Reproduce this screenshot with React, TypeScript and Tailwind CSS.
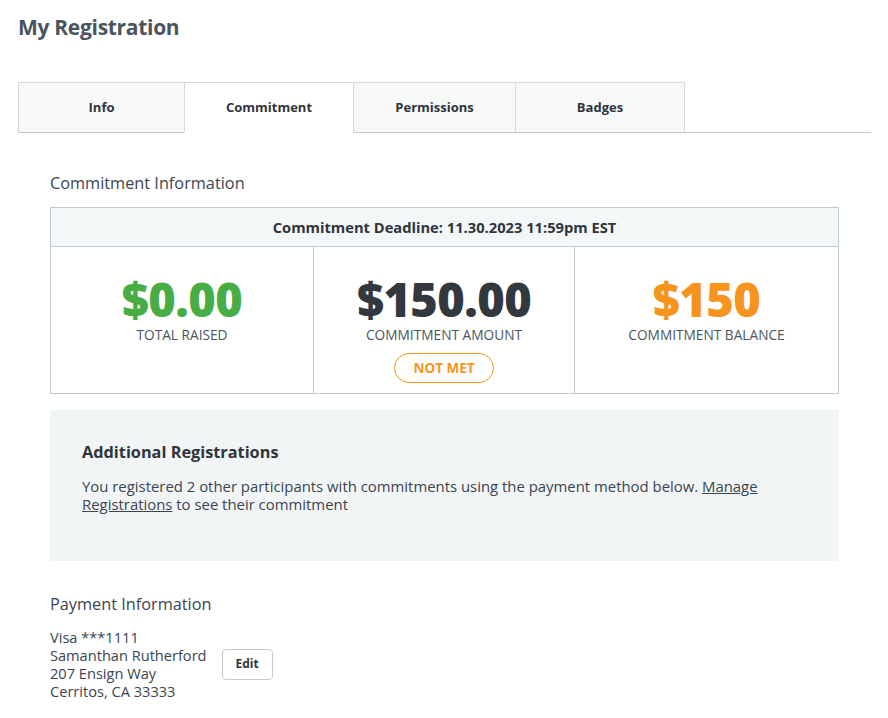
import React from "react";

const font = { fontFamily: '"Open Sans", "Liberation Sans", sans-serif' };

function Tab({ label, active }: { label: string; active?: boolean }) {
  return (
    <div
      className={
        "flex items-center justify-center h-[50px] border-t border-l border-r border-[#d3d9dd] text-[13px] font-bold text-[#2f353b] " +
        (active ? "bg-white border-b border-b-white -mb-px h-[51px]" : "bg-[#f7f9f9]")
      }
    >
      {label}
    </div>
  );
}

export default function App() {
  return (
    <div className="bg-white min-h-[718px] w-[888px] text-[#3b4550]" style={font}>
      <div className="pl-[18px] pr-[17px]">
        <h1 className="pt-[11px] text-[21px] leading-[32px] font-bold text-[#4a545e] tracking-[-0.3px]">
          My Registration
        </h1>
        <div className="mt-[39px] flex border-b border-[#c3cbd1]">
          <div className="w-[167px]"><Tab label="Info" /></div>
          <div className="w-[170px] -ml-px"><Tab label="Commitment" active /></div>
          <div className="w-[163px] -ml-px"><Tab label="Permissions" /></div>
          <div className="w-[170px] -ml-px"><Tab label="Badges" /></div>
        </div>
        <div className="pl-[32px] pr-[32px]">
          <h2 className="mt-[39px] text-[16.3px] leading-[22px] text-[#3b4550]">Commitment Information</h2>
          <div className="mt-[13px] border border-[#c3cbd1] w-[789px]">
            <div className="h-[39px] bg-[#f3f7f8] border-b border-[#c3cbd1] flex items-center justify-center text-[14.7px] font-bold text-[#2f353b]">
              Commitment Deadline: 11.30.2023 11:59pm EST
            </div>
            <div className="grid grid-cols-[262px_262px_1fr] h-[146px]">
              <div className="flex flex-col items-center pt-[25px]">
                <div className="text-[47px] leading-[54px] font-extrabold text-[#48ad45] tracking-[-0.6px]">$0.00</div>
                <div className="text-[13.7px] leading-[18px] text-[#4a5561]">TOTAL RAISED</div>
              </div>
              <div className="flex flex-col items-center pt-[25px] border-l border-r border-[#c3cbd1]">
                <div className="text-[47px] leading-[54px] font-extrabold text-[#32383e] tracking-[-0.6px]">$150.00</div>
                <div className="text-[13.7px] leading-[18px] text-[#4a5561]">COMMITMENT AMOUNT</div>
                <div className="mt-[9px] w-[100px] h-[30px] rounded-full border border-[#f7941d] flex items-center justify-center text-[13.5px] font-bold text-[#f7941d]">
                  NOT MET
                </div>
              </div>
              <div className="flex flex-col items-center pt-[25px]">
                <div className="text-[47px] leading-[54px] font-extrabold text-[#f7941d] tracking-[-0.6px]">$150</div>
                <div className="text-[13.7px] leading-[18px] text-[#4a5561]">COMMITMENT BALANCE</div>
              </div>
            </div>
          </div>
          <div className="mt-[16px] w-[789px] h-[151px] bg-[#f1f5f6] pl-[32px] pr-[60px] pt-[31px]">
            <div className="text-[16.3px] leading-[22px] font-bold text-[#2f353b]">Additional Registrations</div>
            <p className="mt-[14px] text-[14.9px] leading-[18px] text-[#3b4550]">
              You registered 2 other participants with commitments using the payment method below.{" "}
              <span className="underline">Manage Registrations</span> to see their commitment
            </p>
          </div>
          <h2 className="mt-[32px] text-[16.3px] leading-[22px] text-[#3b4550]">Payment Information</h2>
          <div className="mt-[13px] flex items-center">
            <div className="text-[14.6px] leading-[18px] text-[#3b4550]">
              <div>Visa ***1111</div>
              <div>Samanthan Rutherford</div>
              <div>207 Ensign Way</div>
              <div>Cerritos, CA 33333</div>
            </div>
            <div className="ml-[15px] w-[51px] h-[31px] rounded-[4px] border border-[#c3cbd1] flex items-center justify-center text-[12px] font-bold text-[#2f353b]">
              Edit
            </div>
          </div>
        </div>
      </div>
    </div>
  );
}
